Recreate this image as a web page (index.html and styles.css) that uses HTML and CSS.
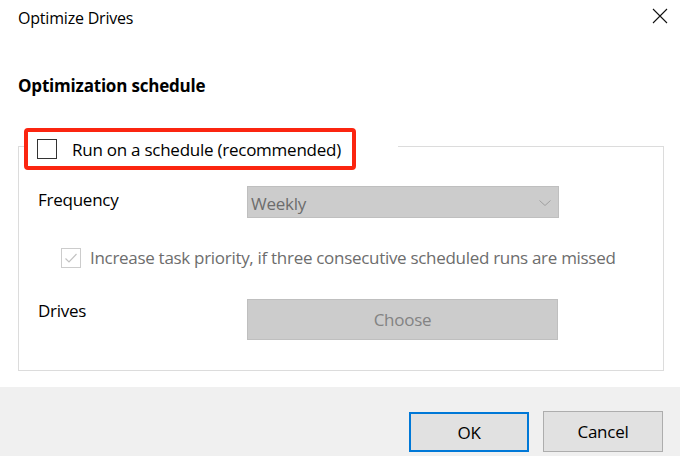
FILE: index.html
```html
<!DOCTYPE html>
<html>
<title>Optimize Drives</title>

<head>
    <meta charset="utf-8">
    <link rel="stylesheet" href="styles.css">
</head>

<body>
    <div class="dialog">
        <div class="titlebar">
            <span class="title">Optimize Drives</span>
            <span class="close">
                <svg width="16" height="16" viewBox="0 0 16 16">
                    <path d="M1 1 L15 15 M15 1 L1 15" stroke="#111" stroke-width="1.1" fill="none" />
                </svg>
            </span>
        </div>

        <div class="content">
            <h2 class="heading">Optimization schedule</h2>

            <fieldset class="group">
                <legend class="group-head">
                    <span class="mark">
                        <span class="box"></span>
                        <span class="run-label">Run on a schedule (recommended)</span>
                    </span>
                </legend>

                <div class="row freq">
                    <span class="label">Frequency</span>
                    <div class="select">
                        <span>Weekly</span>
                        <svg width="12" height="6" viewBox="0 0 12 6">
                            <path d="M0.5 0.5 L6 5.5 L11.5 0.5" stroke="#a0a0a0" stroke-width="1" fill="none" />
                        </svg>
                    </div>
                </div>

                <div class="check-row">
                    <span class="box checked">
                        <svg width="16" height="16" viewBox="0 0 16 16">
                            <path d="M2.5 8.5 L6 12 L13.5 4" stroke="#c2c2c2" stroke-width="1.2" fill="none" />
                        </svg>
                    </span>
                    <span class="muted">Increase task priority, if three consecutive scheduled runs are missed</span>
                </div>

                <div class="row drives">
                    <span class="label">Drives</span>
                    <button class="choose" disabled>Choose</button>
                </div>
            </fieldset>
        </div>

        <div class="footer">
            <button class="btn primary">OK</button>
            <button class="btn">Cancel</button>
        </div>
    </div>
</body>

</html>
```

FILE: styles.css
```css
body {
    margin: 0;
    padding: 0;
    background-color: #fff;
    font-family: "Open Sans", "Noto Sans", sans-serif;
    color: #000;
}

.dialog {
    width: 680px;
    height: 456px;
    display: flex;
    flex-direction: column;
    overflow: hidden;
}

.titlebar {
    height: 36px;
    display: flex;
    align-items: center;
    justify-content: space-between;
    padding: 0 12px 0 18px;
}

.title {
    font-size: 16px;
    letter-spacing: -0.2px;
    color: #000;
}

.close {
    display: flex;
    margin-top: -4px;
}

.content {
    flex: 1;
    padding: 0 16px 0 18px;
}

.heading {
    font-size: 17px;
    font-weight: bold;
    letter-spacing: -0.2px;
    margin: 39px 0 0 0;
    height: 22px;
    line-height: 22px;
}

.group {
    margin: 25px 0 0 0;
    padding: 0 0 30px 0;
    border: 1px solid #dcdcdc;
    min-width: 0;
}

.group-head {
    margin-left: 5px;
    padding: 6px 42px 0 0;
    background-color: #fff;
}

.mark {
    display: flex;
    align-items: center;
    width: 324px;
    height: 34px;
    border: 4px solid #fb2510;
    border-radius: 4px;
    padding: 0;
}

.box {
    width: 18px;
    height: 18px;
    border: 1px solid #333;
    margin-left: 9px;
    flex-shrink: 0;
}

.run-label {
    margin-left: 15px;
    font-size: 17px;
    letter-spacing: -0.25px;
}

.row {
    display: flex;
    align-items: center;
    margin-top: 16px;
    padding-left: 19px;
}

.label {
    width: 209px;
    font-size: 17px;
    letter-spacing: -0.25px;
}

.freq .label {
    margin-top: -5px;
}

.select {
    width: 312px;
    height: 32px;
    box-sizing: border-box;
    background-color: #cccccc;
    border: 1px solid #bfbfbf;
    display: flex;
    align-items: center;
    justify-content: space-between;
    padding: 0 7px 0 3px;
    color: #6d6d6d;
    font-size: 17px;
    letter-spacing: -0.25px;
}

.select span {
    margin-top: 2px;
}

.select svg {
    margin-top: 2px;
}

.check-row {
    display: flex;
    align-items: center;
    margin-top: 28px;
    padding-left: 42px;
}

.box.checked {
    border-color: #cccccc;
    margin-left: 0;
    display: flex;
    align-items: center;
    justify-content: center;
}

.muted {
    margin-left: 9px;
    font-size: 17px;
    letter-spacing: -0.3px;
    color: #6d6d6d;
}

.drives {
    align-items: flex-start;
    margin-top: 30px;
}

.drives .label {
    margin-top: 0;
}

.choose {
    width: 311px;
    height: 41px;
    background-color: #cccccc;
    border: 1px solid #bfbfbf;
    color: #838383;
    font-family: inherit;
    font-size: 17px;
    letter-spacing: -0.25px;
    padding: 0;
}

.footer {
    height: 69px;
    background-color: #f0f0f0;
    display: flex;
    justify-content: flex-end;
    align-items: flex-end;
    gap: 14px;
    padding: 0 17px 4px 0;
    box-sizing: border-box;
}

.btn {
    width: 120px;
    height: 41px;
    background-color: #e1e1e1;
    border: 1px solid #adadad;
    font-family: inherit;
    font-size: 17px;
    letter-spacing: -0.25px;
    color: #000;
    padding: 0;
}

.btn.primary {
    border: 2px solid #0078d7;
    height: 40px;
}
```
